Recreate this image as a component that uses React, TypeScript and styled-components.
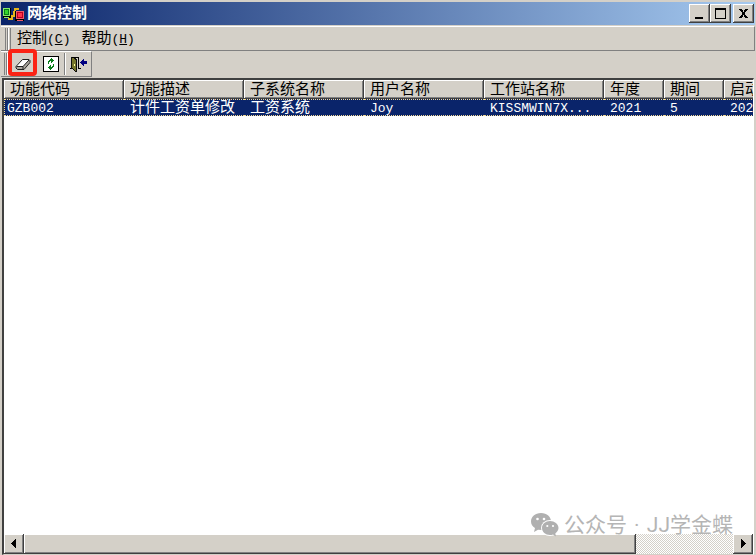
import React from "react";
import styled, { createGlobalStyle, css } from "styled-components";

const face = "#d4d0c8";
const shadow = "#808080";
const dark = "#404040";
const navy = "#0a246a";

const GlobalStyle = createGlobalStyle`
  * { box-sizing: border-box; }
  html, body { margin: 0; height: 100%; }
  body { overflow: hidden; background: ${face}; }
  #root { height: 100%; }
  body, button {
    font-family: "Liberation Mono", "Noto Sans CJK SC", monospace;
    font-size: 15px;
    color: #000;
  }
  button { margin: 0; padding: 0; border: 0; background: none; }
`;

const raised = css`
  background: ${face};
  box-shadow: inset -1px -1px ${dark}, inset 1px 1px #fff, inset -2px -2px ${shadow};
`;

const Window = styled.main`
  height: 100vh;
  display: flex;
  flex-direction: column;
  padding: 2px 1px 0;
  background: ${face};
`;

const TitleBar = styled.header`
  height: 23px;
  flex: none;
  display: flex;
  align-items: center;
  padding: 0 1px;
  background: linear-gradient(90deg, ${navy}, #a6caf0);
`;

const Title = styled.h1`
  flex: 1;
  margin: 0 0 0 3px;
  padding-top: 2px;
  font-size: 15px;
  line-height: 21px;
  font-weight: 700;
  color: #fff;
`;

const CaptionButton = styled.button<{ $apart?: boolean }>`
  ${raised}
  width: 21px;
  height: 19px;
  margin-left: ${(p) => (p.$apart ? 2 : 0)}px;
  display: grid;
  place-items: center;
`;

const MenuBar = styled.nav`
  height: 25px;
  flex: none;
  display: flex;
  align-items: center;
  margin-top: 1px;
  padding-left: 4px;
  border: solid;
  border-width: 1px 1px 1px 0;
  border-color: #fff ${shadow} ${shadow};
`;

const Grip = styled.span`
  width: 6px;
  height: 22px;
  flex: none;
  border: solid;
  border-width: 0 1px;
  border-color: #fff ${shadow};
  background: linear-gradient(90deg, ${face} 1px, ${shadow} 1px 2px, #fff 2px 3px, ${face} 3px);
`;

const MenuItem = styled.button`
  padding: 2px 5px 0 6px;
  line-height: 21px;
  white-space: nowrap;
`;

const Latin = styled.span`
  font-size: 13px;
`;

const ToolBar = styled.div`
  height: 26px;
  flex: none;
  align-self: flex-start;
  display: flex;
  align-items: center;
  padding-left: 3px;
  border: solid;
  border-width: 1px 1px 1px 0;
  border-color: #fff ${shadow} ${shadow};
`;

const ToolButton = styled.button<{ $marked?: boolean }>`
  position: relative;
  width: 26px;
  height: 24px;
  display: grid;
  place-items: center;
  &:last-child { width: 25px; }
  ${(p) =>
    p.$marked &&
    css`
      margin-right: 2px;
      &::after {
        content: "";
        position: absolute;
        inset: -3px -1px 0 -2px;
        border: 4px solid #fb2315;
        border-radius: 4px;
      }
    `}
`;

const ToolDivider = styled.span`
  width: 2px;
  height: 22px;
  border-left: 1px solid ${shadow};
  border-right: 1px solid #fff;
`;

const ListFrame = styled.section`
  position: relative;
  flex: 1;
  min-height: 0;
  display: flex;
  flex-direction: column;
  margin: 1px 1px 0;
  border: solid;
  border-width: 2px 1px 1px 2px;
  border-color: ${dark} #fff ${face} ${dark};
  background: #fff;
`;

const ListView = styled.div`
  flex: 1;
  min-height: 0;
  overflow: hidden;
`;

const Table = styled.table`
  width: 860px;
  table-layout: fixed;
  border-collapse: separate;
  border-spacing: 0;
`;

const Col = styled.col<{ $w: number }>`
  width: ${(p) => p.$w}px;
`;

const Th = styled.th`
  ${raised}
  height: 19px;
  padding: 2px 0 0 6px;
  font-weight: 400;
  font-size: 15px;
  line-height: 17px;
  text-align: left;
  white-space: nowrap;
`;

const Td = styled.td<{ $latin?: boolean }>`
  height: 17px;
  padding: 2px 0 0 6px;
  font-size: ${(p) => (p.$latin ? 13 : 15)}px;
  line-height: 13px;
  color: #fff;
  background: ${navy};
  border: 1px dotted #f5db95;
  border-width: 1px 0;
  white-space: nowrap;
  &:first-child {
    padding-left: 2px;
    border-left-width: 1px;
  }
`;

const ScrollBar = styled.div`
  height: 20px;
  flex: none;
  display: flex;
  background: repeating-conic-gradient(#fff 0 25%, ${face} 0 50%) 0 0 / 2px 2px;
`;

const ScrollButton = styled.button`
  ${raised}
  width: 20px;
  flex: none;
  display: grid;
  place-items: center;
`;

const Thumb = styled.div`
  ${raised}
  flex: 612;
`;

const TrackRest = styled.div`
  flex: 97;
`;

const Watermark = styled.div`
  position: absolute;
  right: 20px;
  bottom: 14px;
  display: flex;
  align-items: center;
  gap: 5px;
  font: 21px/30px Roboto, "Noto Sans CJK SC", sans-serif;
  color: #b5b5b5;
  white-space: nowrap;
`;

const Dot = styled.span`
  margin: 0 2px;
`;

const AppIcon = () => (
  <svg width="22" height="18" viewBox="0 0 22 18" shapeRendering="crispEdges" aria-hidden="true">
    <path d="M1 3h8v10H1z" fill="#000" />
    <path d="M1 3h7v8H1z" fill="#8bea6a" />
    <path d="M2 4h5v6H2z" fill="#087c18" />
    <path d="M3 5h3v4H3z" fill="#35d52d" />
    <path d="M2 12h5v1H2z" fill="#8bea6a" />
    <path d="M6 14h4v-3h2V7h1V4h4" fill="none" stroke="#e5b51c" strokeWidth="2" />
    <path d="M13 6h9v10h-9z" fill="#000" />
    <path d="M14 6h8v8h-8z" fill="#ef5b67" />
    <path d="M15 7h6v6h-6z" fill="#b90022" />
    <path d="M16 8h4v4h-4z" fill="#ff3448" />
    <path d="M15 15h6v1h-6z" fill="#ef5b67" />
  </svg>
);

const EraserIcon = () => (
  <svg width="18" height="16" viewBox="0 0 18 16" aria-hidden="true">
    <path d="M2 10.500L8.500 3.500H15L9 10.500z" fill="#fff" />
    <path d="M2 10.500h7v3H3.500L2 12zM9 10.500l6-7 1 1v2l-6 7H9z" fill="#aaa69e" />
    <path d="M2 10.500L8.500 3.500H15l1 1v2l-6 7H3.500L2 12zM2.500 10.500H9l6-6.500M9 10.500v2.500" fill="none" stroke="#222" />
  </svg>
);

const RefreshIcon = () => (
  <svg width="16" height="16" viewBox="0 0 16 16" shapeRendering="crispEdges" aria-hidden="true">
    <path d="M.5.5h15v15H.5z" fill="#fff" stroke="#000" />
    <path d="M8 2h1v1h1v1h1v1h-1v1H9v1H8V5H7v1H6v2H5V5h1V4h1V3h1z" fill="#087d19" />
    <path d="M8 14H7v-1H6v-1H5v-1h1v-1h1V9h1v2h1v-1h1V8h1v3h-1v1H9v1H8z" fill="#087d19" />
  </svg>
);

const ExitIcon = () => (
  <svg width="17" height="16" viewBox="0 0 17 16" shapeRendering="crispEdges" aria-hidden="true">
    <path d="M1 1h8v11H8V2H1zM0 12h3v1H0zM8 12h3v1H8z" fill="#000" />
    <path d="M2 2h3v1h1v12H5v-1H4v-1H3v-1H2z" fill="#77772b" />
    <path d="M1 1h1v11h1v1h1v1h1v1h1V4H5V3H4V2h2v1h1v13H5v-1H4v-1H3v-1H1z" fill="#111" />
    <path d="M4 8h1v2H4z" fill="#ffff9c" />
    <path d="M10 6h1V5h1V4h1V3h1v2h3v3h-3v2h-1V9h-1V8h-1V7h-1z" fill="#000080" />
  </svg>
);

const MinimizeIcon = () => (
  <svg width="13" height="13" viewBox="0 0 13 13" aria-hidden="true">
    <path d="M2 10h8v2H2z" />
  </svg>
);

const MaximizeIcon = () => (
  <svg width="13" height="13" viewBox="0 0 13 13" shapeRendering="crispEdges" aria-hidden="true">
    <path d="M1 1h11v11H1zM2 3v8h9V3z" fillRule="evenodd" />
  </svg>
);

const CloseIcon = () => (
  <svg width="13" height="13" viewBox="0 0 13 13" shapeRendering="crispEdges" aria-hidden="true">
    <path d="M2 2h2v1h1v1h1v1h1V4h1V3h1V2h2v1h-1v1H9v1H8v1H7v1h1v1h1v1h1v1h1v1H9v-1H8V9H7V8H6v1H5v1H4v1H2v-1h1V9h1V8h1V7h1V6H5V5H4V4H3V3H2z" />
    <path d="M4 2h1v2H4zM8 2h1v2H8zM4 9h1v2H4zM8 9h1v2H8zM5 3h1v7H5zM7 3h1v7H7z" />
  </svg>
);

const ArrowIcon = ({ right }: { right?: boolean }) => (
  <svg width="8" height="10" viewBox="0 0 8 10" shapeRendering="crispEdges" aria-hidden="true">
    <path d={right ? "M2 0h1v1h1v1h1v1h1v1h1v1H6v1H5v1H4v1H3v1H2z" : "M6 0v9H5V8H4V7H3V6H2V5H1V4h1V3h1V2h1V1h1V0z"} />
  </svg>
);

const WeChatIcon = () => (
  <svg width="28" height="24" viewBox="0 0 28 24" aria-hidden="true">
    <path d="M10 0C4 0 0 4 0 8.500c0 3 1.500 5 4 6.500l-1 4 4-2.300 4 .3C19 17 20 12 20 8.500 20 4 16 0 10 0z" fill="#b0b0b0" />
    <ellipse cx="19" cy="15" rx="9" ry="8" fill="#fff" />
    <path d="M19 8c-4.500 0-8 3-8 7s3.500 7 8 7c1 0 2 0 3-.5l3 2-.7-3C26 19 27.500 17 27.500 15c0-4-4-7-8.500-7z" fill="#b0b0b0" />
    <g fill="#fff">
      <circle cx="6.500" cy="6" r="1.300" />
      <circle cx="13" cy="6" r="1.300" />
      <circle cx="16.300" cy="13" r="1.100" />
      <circle cx="22" cy="13" r="1.100" />
    </g>
  </svg>
);

const columns = [
  { label: "功能代码", width: 120, value: "GZB002", latin: true },
  { label: "功能描述", width: 120, value: "计件工资单修改" },
  { label: "子系统名称", width: 120, value: "工资系统" },
  { label: "用户名称", width: 120, value: "Joy", latin: true },
  { label: "工作站名称", width: 120, value: "KISSMWIN7X...", latin: true },
  { label: "年度", width: 60, value: "2021", latin: true },
  { label: "期间", width: 60, value: "5", latin: true },
  { label: "启动", width: 140, value: "202", latin: true },
];

export default function App() {
  return (
    <>
      <GlobalStyle />
      <Window>
        <TitleBar>
          <AppIcon />
          <Title>网络控制</Title>
          <CaptionButton aria-label="最小化"><MinimizeIcon /></CaptionButton>
          <CaptionButton aria-label="最大化"><MaximizeIcon /></CaptionButton>
          <CaptionButton $apart aria-label="关闭"><CloseIcon /></CaptionButton>
        </TitleBar>
        <MenuBar>
          <Grip />
          <MenuItem>控制<Latin>(<u>C</u>)</Latin></MenuItem>
          <MenuItem>帮助<Latin>(<u>H</u>)</Latin></MenuItem>
        </MenuBar>
        <ToolBar>
          <Grip />
          <ToolButton $marked aria-label="清除"><EraserIcon /></ToolButton>
          <ToolButton aria-label="刷新"><RefreshIcon /></ToolButton>
          <ToolDivider />
          <ToolButton aria-label="退出"><ExitIcon /></ToolButton>
        </ToolBar>
        <ListFrame>
          <ListView>
            <Table>
              <colgroup>
                {columns.map((c) => <Col key={c.label} $w={c.width} />)}
              </colgroup>
              <thead>
                <tr>{columns.map((c) => <Th key={c.label} scope="col">{c.label}</Th>)}</tr>
              </thead>
              <tbody>
                <tr>{columns.map((c) => <Td key={c.label} $latin={c.latin}>{c.value}</Td>)}</tr>
              </tbody>
            </Table>
          </ListView>
          <ScrollBar>
            <ScrollButton aria-label="向左滚动"><ArrowIcon /></ScrollButton>
            <Thumb />
            <TrackRest />
            <ScrollButton aria-label="向右滚动"><ArrowIcon right /></ScrollButton>
          </ScrollBar>
          <Watermark><WeChatIcon /><span>公众号<Dot> · </Dot>JJ学金蝶</span></Watermark>
        </ListFrame>
      </Window>
    </>
  );
}
